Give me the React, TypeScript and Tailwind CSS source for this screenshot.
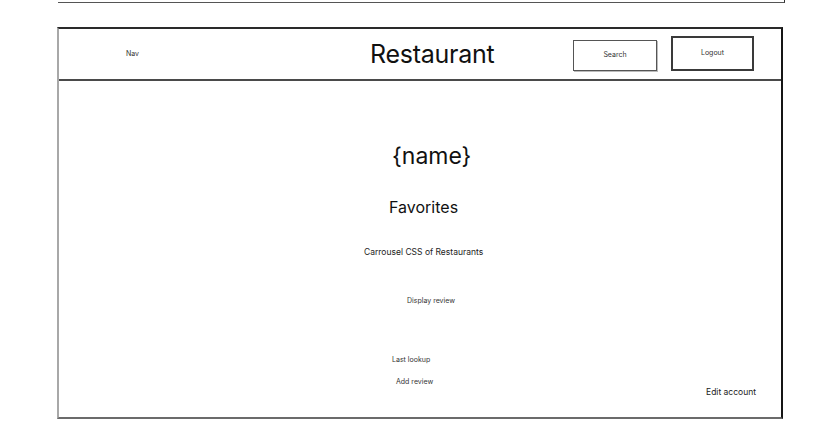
export default function App() {
  return (
    <div className="h-[432px] w-[820px] overflow-hidden bg-white font-['Inter',sans-serif] text-[#1a1a1a]">
      {/* edge of the frame above */}
      <div className="ml-[58px] h-[3px] w-[727px] border-b border-r border-b-[#555] border-r-[#333]" />

      <div className="ml-[57px] mt-[24px] flex h-[392px] w-[726px] flex-col border-b-2 border-l-2 border-r-2 border-t-2 border-b-[#6b6b6b] border-l-[#a8a8a8] border-r-[#151515] border-t-[#2a2a2a]">
        <header className="flex h-[52px] shrink-0 items-center border-b-2 border-b-[#4a4a4a]">
          <div className="w-[311px] pl-[67px] text-[7px] text-[#333]">Nav</div>
          <div className="w-[203px] text-[25px] leading-none tracking-[-0.01em] text-[#111]">Restaurant</div>
          <button className="mt-[2px] flex h-[31px] w-[84px] items-center justify-center border border-[#555] text-[7px] text-[#333] shadow-[1px_1px_0_#bbb]">
            Search
          </button>
          <button className="ml-[14px] mb-[2px] flex h-[35px] w-[83px] items-center justify-center border-2 border-[#3a3a3a] text-[7px] text-[#333]">
            Logout
          </button>
        </header>

        <main className="flex flex-1 flex-col">
          <div className="ml-[333px] mt-[64px] text-[23px] leading-none text-[#111]">{"{name}"}</div>
          <div className="ml-[330px] mt-[31px] text-[16px] leading-none text-[#111]">Favorites</div>
          <div className="ml-[305px] mt-[33px] text-[8.5px] leading-none text-[#222]">
            Carrousel CSS of Restaurants
          </div>
          <div className="ml-[348px] mt-[40px] text-[7px] leading-none text-[#333]">Display review</div>
          <div className="ml-[333px] mt-[52px] text-[7px] leading-none text-[#333]">Last lookup</div>
          <div className="ml-[337px] mt-[15px] text-[7px] leading-none text-[#333]">Add review</div>
          <div className="mt-[3px] flex justify-end pr-[25px] text-[8.5px] leading-none text-[#222]">
            Edit account
          </div>
        </main>
      </div>
    </div>
  );
}
